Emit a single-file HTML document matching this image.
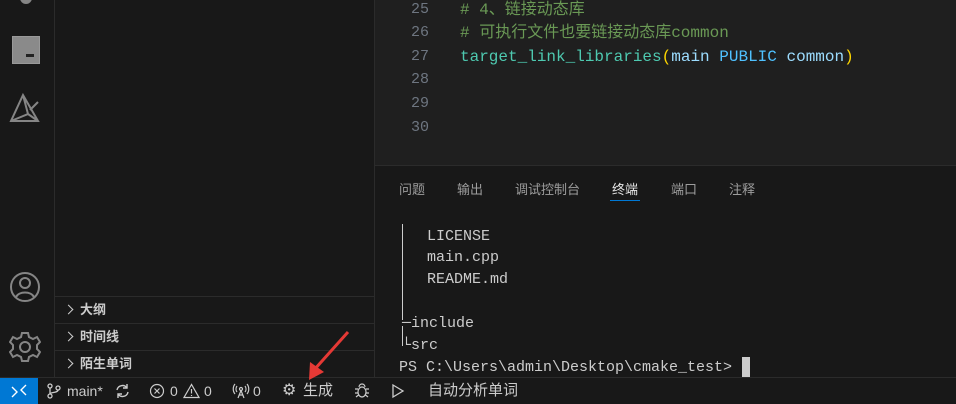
<!DOCTYPE html>
<html><head><meta charset="utf-8"><style>
body{margin:0;width:956px;height:404px;background:#181818;position:relative;overflow:hidden;font-family:"Liberation Sans","Noto Sans CJK SC",sans-serif;color:#ccc}
.abs{position:absolute}
.mono{font-family:"Liberation Mono","Noto Sans CJK SC",monospace}
.ln{position:absolute;left:395px;width:34px;text-align:right;color:#6e7681;font-size:15px;line-height:20px}
.cl{position:absolute;left:460px;font-size:16px;white-space:pre;line-height:20px}
.tl{position:absolute;font-size:15px;color:#cccccc;white-space:pre;line-height:20px}
.sec{position:absolute;left:55px;width:319px;height:26px;border-top:1px solid #2b2b2b;font-size:13px;font-weight:bold;color:#ccc;line-height:26px}
.sec span{margin-left:25px}
.sec:before{content:"";position:absolute;left:10px;top:9px;width:6px;height:6px;border-right:1.5px solid #ccc;border-top:1.5px solid #ccc;transform:rotate(45deg)}
.st{position:absolute;top:378px;font-size:14px;color:#ccc;line-height:26px}
.tab{position:absolute;top:179px;font-size:13px;color:#9d9d9d}
</style></head><body>
<div class="abs" style="left:54px;top:0;width:1px;height:378px;background:#2b2b2b"></div>
<div class="abs" style="left:374px;top:0;width:1px;height:378px;background:#2b2b2b"></div>
<div class="abs" style="left:375px;top:0;width:581px;height:165px;background:#1f1f1f"></div>
<div class="abs" style="left:375px;top:165px;width:581px;height:1px;background:#2b2b2b"></div>
<div class="abs" style="left:20px;top:-8px;width:12px;height:12px;border-radius:6px;background:#858585"></div>
<div class="abs" style="left:12px;top:36px;width:26px;height:26px;background:#8a8a8a;border:1px solid #999"><div class="abs" style="left:13px;top:17px;width:8px;height:3px;background:#222"></div></div>
<svg class="abs" style="left:8px;top:92px" width="34" height="34" viewBox="0 0 34 34" fill="none" stroke="#858585" stroke-width="2"><path d="M15 3L3 29H30Z M15 3L20 22L3 29 M20 22L30 29"/><path d="M22 18l8-8"/></svg>
<svg class="abs" style="left:9px;top:271px" width="32" height="32" viewBox="0 0 32 32" fill="none" stroke="#858585" stroke-width="2"><circle cx="16" cy="16" r="14"/><circle cx="16" cy="12" r="5"/><path d="M7 26c3-6 15-6 18 0"/></svg>
<svg class="abs" style="left:9px;top:331px" width="32" height="32" viewBox="0 0 32 32" fill="none" stroke="#858585" stroke-width="2"><circle cx="16" cy="16" r="5"/><path d="M13 2h6l1 4 4 2 4-2 3 5-3 3v4l3 3-3 5-4-2-4 2-1 4h-6l-1-4-4-2-4 2-3-5 3-3v-4l-3-3 3-5 4 2 4-2z"/></svg>
<div class="sec" style="top:296px"><span>大纲</span></div>
<div class="sec" style="top:323px"><span>时间线</span></div>
<div class="sec" style="top:350px;height:27px"><span>陌生单词</span></div>
<div class="mono">
<div class="ln" style="top:0px">25</div><div class="cl" style="top:0px;color:#6a9955"># 4、链接动态库</div>
<div class="ln" style="top:23px">26</div><div class="cl" style="top:23px;color:#6a9955"># 可执行文件也要链接动态库common</div>
<div class="ln" style="top:47px">27</div><div class="cl" style="top:47px"><span style="color:#4ec9b0">target_link_libraries</span><span style="color:#ffd700">(</span><span style="color:#9cdcfe">main</span> <span style="color:#4fc1ff">PUBLIC</span> <span style="color:#9cdcfe">common</span><span style="color:#ffd700">)</span></div>
<div class="ln" style="top:70px">28</div>
<div class="ln" style="top:94px">29</div>
<div class="ln" style="top:118px">30</div>
</div>
<div class="tab" style="left:399px">问题</div>
<div class="tab" style="left:457px">输出</div>
<div class="tab" style="left:515px">调试控制台</div>
<div class="tab" style="left:612px;color:#e7e7e7">终端</div>
<div class="tab" style="left:671px">端口</div>
<div class="tab" style="left:729px">注释</div>
<div class="abs" style="left:610px;top:200px;width:30px;height:1px;background:#0078d4"></div>
<div class="mono">
<div class="abs" style="left:402px;top:224px;width:1px;height:96px;background:#ccc"></div>
<div class="abs" style="left:402px;top:326px;width:1px;height:20px;background:#ccc"></div>
<div class="tl" style="left:427px;top:227px">LICENSE</div>
<div class="tl" style="left:427px;top:248px">main.cpp</div>
<div class="tl" style="left:427px;top:270px">README.md</div>
<div class="tl" style="left:402px;top:314px">─include</div>
<div class="tl" style="left:402px;top:336px">└src</div>
<div class="tl" style="left:399px;top:358px">PS C:\Users\admin\Desktop\cmake_test&gt;</div>
<div class="abs" style="left:742px;top:357px;width:8px;height:20px;background:#ccc"></div>
</div>
<div class="abs" style="left:0;top:377px;width:956px;height:1px;background:#2b2b2b"></div>
<div class="abs" style="left:0;top:378px;width:38px;height:26px;background:#0078d4"></div>
<svg class="abs" style="left:10px;top:383px" width="18" height="16" viewBox="0 0 18 16" fill="none" stroke="#fff" stroke-width="1.4"><path d="M2 14l5-5-5-5M16 2l-5 5 5 5"/></svg>
<svg class="abs" style="left:46px;top:383px" width="16" height="16" viewBox="0 0 16 16" fill="none" stroke="#ccc" stroke-width="1.3"><circle cx="4" cy="3" r="2"/><circle cx="4" cy="13" r="2"/><circle cx="12" cy="5" r="2"/><path d="M4 5v6M12 7c0 3-8 2-8 4"/></svg>
<div class="st" style="left:67px">main*</div>
<svg class="abs" style="left:114px;top:383px" width="17" height="16" viewBox="0 0 17 16" fill="none" stroke="#ccc" stroke-width="1.4"><path d="M3 7a5.5 5.5 0 0 1 10-2M14 9a5.5 5.5 0 0 1-10 2"/><path d="M13 1v4h-4M4 15v-4h4"/></svg>
<svg class="abs" style="left:149px;top:383px" width="16" height="16" viewBox="0 0 16 16" fill="none" stroke="#ccc" stroke-width="1.2"><circle cx="8" cy="8" r="6.5"/><path d="M5.5 5.5l5 5M10.5 5.5l-5 5"/></svg>
<div class="st" style="left:170px">0</div>
<svg class="abs" style="left:183px;top:383px" width="17" height="16" viewBox="0 0 17 16" fill="none" stroke="#ccc" stroke-width="1.2"><path d="M8.5 1.5L1 14.5h15Z M8.5 6v4.5M8.5 12v1"/></svg>
<div class="st" style="left:204px">0</div>
<svg class="abs" style="left:232px;top:383px" width="18" height="16" viewBox="0 0 18 16" fill="none" stroke="#ccc" stroke-width="1.2"><circle cx="9" cy="6" r="1.5"/><path d="M9 7.5L6 15M9 7.5L12 15M7 12h4M5 3a5 5 0 0 0 0 6M13 3a5 5 0 0 1 0 6M3 1a8 8 0 0 0 0 10M15 1a8 8 0 0 1 0 10"/></svg>
<div class="st" style="left:253px">0</div>
<div class="st" style="left:282px;font-size:16px">⚙</div>
<div class="st" style="left:303px;font-size:15px">生成</div>
<svg class="abs" style="left:354px;top:382px" width="16" height="17" viewBox="0 0 16 17" fill="none" stroke="#ccc" stroke-width="1.2"><ellipse cx="8" cy="10" rx="4" ry="5"/><path d="M5 5a3 3 0 0 1 6 0M1 7h3M12 7h3M1 11h3M12 11h3M2 15l2.5-2M14 15l-2.5-2"/></svg>
<svg class="abs" style="left:391px;top:383px" width="14" height="16" viewBox="0 0 14 16" fill="none" stroke="#ccc" stroke-width="1.3"><path d="M2 2l10 6-10 6z"/></svg>
<div class="st" style="left:428px;font-size:15px">自动分析单词</div>
<svg class="abs" style="left:300px;top:328px" width="52" height="54" viewBox="0 0 52 54"><path d="M48 4L14 42" stroke="#e53935" stroke-width="3"/><path d="M9 52L10 34L24 44Z" fill="#e53935"/></svg>
</body></html>
